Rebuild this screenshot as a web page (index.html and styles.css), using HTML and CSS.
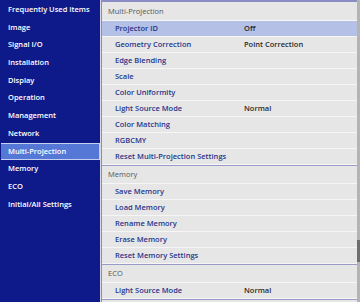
FILE: index.html
```html
<!DOCTYPE html>
<html lang="en">
<head>
  <meta charset="UTF-8" />
  <title>Projector Menu</title>
  <link rel="stylesheet" href="styles.css">
</head>
<body>
  <div class="screen">
    <!-- Top menu -->
    <div class="sidebar">
      <div class="side-item">Frequently Used Items</div>
      <div class="side-item">Image</div>
      <div class="side-item">Signal I/O</div>
      <div class="side-item">Installation</div>
      <div class="side-item">Display</div>
      <div class="side-item">Operation</div>
      <div class="side-item">Management</div>
      <div class="side-item">Network</div>
      <div class="side-item active">Multi-Projection</div>
      <div class="side-item">Memory</div>
      <div class="side-item">ECO</div>
      <div class="side-item">Initial/All Settings</div>
    </div>

    <!-- Sub menu -->
    <div class="panel">
      <div class="group">
        <div class="group-title first">Multi-Projection</div>
        <div class="row selected"><span class="label">Projector ID</span><span class="value">Off</span></div>
        <div class="row"><span class="label">Geometry Correction</span><span class="value">Point Correction</span></div>
        <div class="row"><span class="label">Edge Blending</span></div>
        <div class="row"><span class="label">Scale</span></div>
        <div class="row"><span class="label">Color Uniformity</span></div>
        <div class="row"><span class="label">Light Source Mode</span><span class="value">Normal</span></div>
        <div class="row"><span class="label">Color Matching</span></div>
        <div class="row"><span class="label">RGBCMY</span></div>
        <div class="row"><span class="label">Reset Multi-Projection Settings</span></div>
      </div>
      <div class="group">
        <div class="group-title">Memory</div>
        <div class="row"><span class="label">Save Memory</span></div>
        <div class="row"><span class="label">Load Memory</span></div>
        <div class="row"><span class="label">Rename Memory</span></div>
        <div class="row"><span class="label">Erase Memory</span></div>
        <div class="row"><span class="label">Reset Memory Settings</span></div>
      </div>
      <div class="group">
        <div class="group-title">ECO</div>
        <div class="row"><span class="label">Light Source Mode</span><span class="value">Normal</span></div>
      </div>
    </div>

    <div class="scrollbar">
      <div class="thumb"></div>
    </div>
  </div>
</body>
</html>
```

FILE: styles.css
```css
body {
  margin: 0;
  font-family: "Open Sans", sans-serif;
  font-size: 7.5px;
  background: #0f1a8a;
}

.screen {
  display: flex;
  width: 360px;
  height: 302px;
  overflow: hidden;
}

.sidebar {
  width: 100px;
  flex-shrink: 0;
  background: #0f1a8a;
  padding-top: 1px;
  border-right: 1px solid #d8d8e8;
}

.side-item {
  box-sizing: border-box;
  height: 17.7px;
  line-height: 17.7px;
  padding-left: 8px;
  color: white;
  font-weight: 600;
  white-space: nowrap;
}

.side-item.active {
  background: #5577d6;
  border: 1px solid #c8d0f0;
  border-left: none;
  margin-left: 1px;
  line-height: 15.7px;
  padding-left: 7px;
}

.panel {
  flex: 1;
  background: #e6e6e6;
  border-top: 2px solid #8c8cc4;
  border-left: 1px solid #8c8cc4;
  overflow: hidden;
}

.group {
  border-bottom: 1px solid #9a9ac8;
}

.group-title {
  height: 17px;
  line-height: 17px;
  padding-left: 6px;
  color: #555;
  border-bottom: 1px solid #f6f6f6;
}

.group-title.first {
  height: 18px;
  line-height: 18px;
}

.row {
  display: flex;
  height: 15px;
  line-height: 15px;
  border-bottom: 1px solid #f6f6f6;
  white-space: nowrap;
}

.row .label {
  width: 129px;
  padding-left: 13px;
  color: #27358a;
  font-weight: 600;
}

.row .value {
  color: #2a2a2a;
  font-weight: 600;
}

.row.selected {
  background: #b5c0e6;
}

.scrollbar {
  width: 3px;
  flex-shrink: 0;
  background: #b4b4b4;
  display: flex;
  flex-direction: column;
  justify-content: flex-end;
  padding-bottom: 40px;
}

.thumb {
  height: 22px;
  background: #6e6e6e;
}
```
